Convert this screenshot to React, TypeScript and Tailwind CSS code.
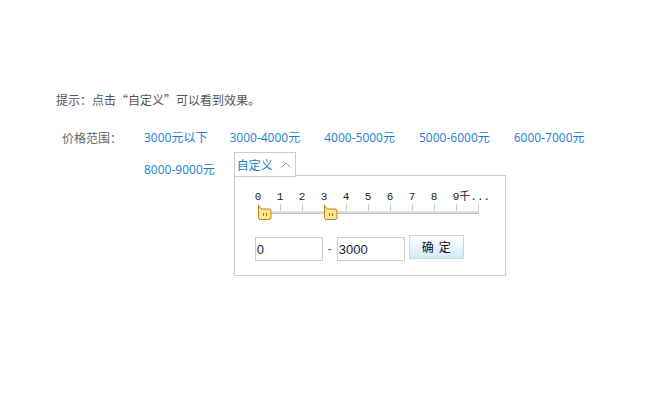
import { useState } from 'react';

const ranges = ['3000元以下', '3000-4000元', '4000-5000元', '5000-6000元', '6000-7000元', '8000-9000元'];
const marks = ['0', '1', '2', '3', '4', '5', '6', '7', '8', '9千...'];

function Handle({ left }: { left: number }) {
  return (
    <svg
      className="absolute top-[1px]"
      style={{ left }}
      width="14"
      height="15"
      viewBox="0 0 14 15"
    >
      <path
        d="M0.5 0.5 L3.5 4 H11 Q13 4 13 6 V12.5 Q13 14.5 11 14.5 H2.5 Q0.5 14.5 0.5 12.5 Z"
        fill="#fbe39a"
        stroke="#bf820c"
      />
      <path d="M5.5 8 V11 M8.5 8 V11" stroke="#a86f08" />
    </svg>
  );
}

export default function App() {
  const [min, setMin] = useState('0');
  const [max, setMax] = useState('3000');

  return (
    <div className="min-h-[400px] bg-white pt-[92px] pl-[56px] text-[12px] font-['Noto_Sans_CJK_SC',sans-serif]">
      <p className="leading-[16px] text-[#555]">提示：点击“自定义”可以看到效果。</p>

      <div className="mt-[14px] flex">
        <div className="w-[88px] shrink-0 pl-[6px] leading-[32px] text-[#666]">价格范围：</div>
        <ul className="flex w-[480px] flex-wrap font-['Open_Sans','Noto_Sans_CJK_SC',sans-serif]">
          {ranges.map((r, i) => (
            <li key={r} className={i === 0 ? 'mr-[22px] leading-[32px]' : 'mr-[24px] leading-[32px]'}>
              <a className="cursor-pointer text-[#1a7fd0]">{r}</a>
            </li>
          ))}
          {/* custom range tab with its dropdown */}
          <li className="relative -ml-[5px] -mt-[2px] self-start font-['Noto_Sans_CJK_SC',sans-serif]">
            <div className="relative z-10 flex h-[25px] items-center gap-[8px] border border-[#ccc] bg-white pl-[2px] pr-[4px]">
              <span className="leading-[16px] text-[#1a7fd0]">自定义</span>
              <svg width="10" height="6" viewBox="0 0 10 6">
                <polyline points="0.5,5.5 5,1 9.5,5.5" fill="none" stroke="#999" />
              </svg>
            </div>
            <div className="absolute left-0 top-[23px] h-[101px] w-[272px] border border-[#ccc] bg-white pt-[14px]">
              {/* slider */}
              <div className="relative ml-[23px] w-[221px]">
                <div className="-ml-[3px] flex font-['Liberation_Mono','Noto_Sans_CJK_SC',monospace] text-[11px] leading-[14px] text-[#222]">
                  {marks.map((m) => (
                    <span key={m} className="w-[22px] shrink-0 whitespace-nowrap">
                      {m}
                    </span>
                  ))}
                </div>
                <div className="flex h-[7px]">
                  {marks.map((m) => (
                    <span key={m} className="h-full w-[22px] shrink-0 border-l border-[#ccc]" />
                  ))}
                  <span className="h-full border-l border-[#ccc]" />
                </div>
                <div className="h-[3px] w-[221px] border-b border-[#c4c4c4] bg-[#dedede]" />
                <div className="absolute left-0 top-[14px] h-[16px] w-full">
                  <Handle left={0} />
                  <Handle left={66} />
                </div>
              </div>

              {/* inputs */}
              <div className="mt-[21px] ml-[20px] flex items-start">
                <input
                  value={min}
                  onChange={(e) => setMin(e.target.value)}
                  className="mt-[2px] h-[24px] w-[68px] border border-[#ccc] pl-[1px] font-['Liberation_Sans',sans-serif] text-[13px] text-[#1a1a40] outline-none"
                />
                <span className="mx-[5px] mt-[6px] font-['Liberation_Sans',sans-serif] text-[12px] leading-[16px] text-[#555]">-</span>
                <input
                  value={max}
                  onChange={(e) => setMax(e.target.value)}
                  className="mt-[2px] h-[24px] w-[68px] border border-[#ccc] pl-[1px] font-['Liberation_Sans',sans-serif] text-[13px] text-[#1a1a40] outline-none"
                />
                <button className="ml-[4px] h-[24px] w-[55px] border border-[#ccd6de] bg-gradient-to-b from-white to-[#d3e9f8] text-[12px] leading-[16px] tracking-[5px] text-[#111]">
                  <span className="pl-[5px]">确定</span>
                </button>
              </div>
            </div>
          </li>
        </ul>
      </div>
    </div>
  );
}
